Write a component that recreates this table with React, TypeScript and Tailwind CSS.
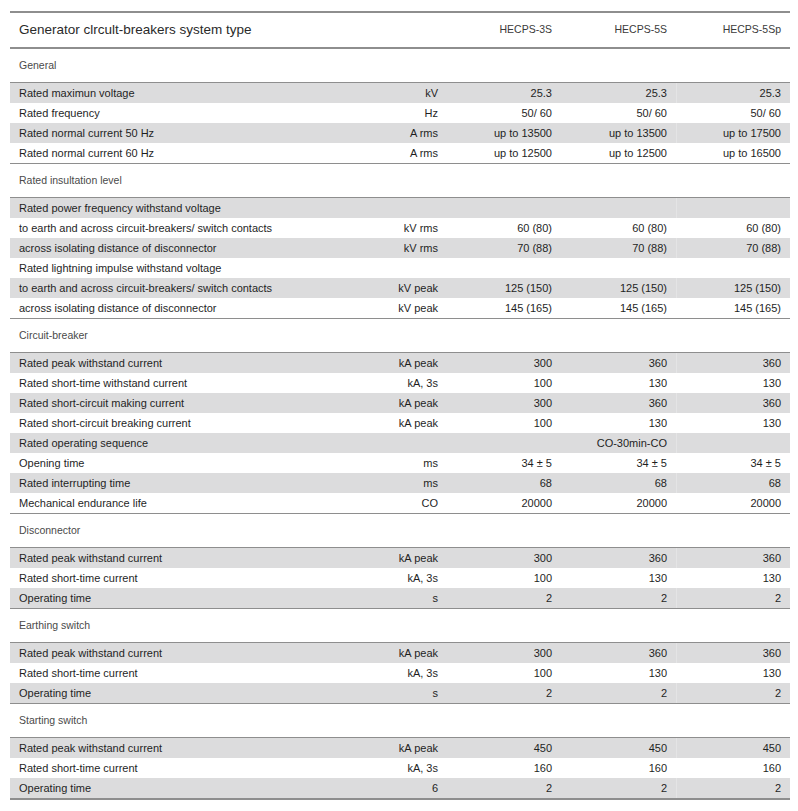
import React from "react";

type Row = { label: string; unit?: string; values?: string[] };
type Section = { title: string; rows: Row[] };

const sections: Section[] = [
  {
    title: "General",
    rows: [
      { label: "Rated maximun voltage", unit: "kV", values: ["25.3", "25.3", "25.3"] },
      { label: "Rated frequency", unit: "Hz", values: ["50/ 60", "50/ 60", "50/ 60"] },
      { label: "Rated normal current 50 Hz", unit: "A rms", values: ["up to 13500", "up to 13500", "up to 17500"] },
      { label: "Rated normal current 60 Hz", unit: "A rms", values: ["up to 12500", "up to 12500", "up to 16500"] },
    ],
  },
  {
    title: "Rated insultation level",
    rows: [
      { label: "Rated power frequency withstand voltage" },
      { label: "to earth and across circuit-breakers/ switch contacts", unit: "kV rms", values: ["60 (80)", "60 (80)", "60 (80)"] },
      { label: "across isolating distance of disconnector", unit: "kV rms", values: ["70 (88)", "70 (88)", "70 (88)"] },
      { label: "Rated lightning impulse withstand voltage" },
      { label: "to earth and across circuit-breakers/ switch contacts", unit: "kV peak", values: ["125 (150)", "125 (150)", "125 (150)"] },
      { label: "across isolating distance of disconnector", unit: "kV peak", values: ["145 (165)", "145 (165)", "145 (165)"] },
    ],
  },
  {
    title: "Circuit-breaker",
    rows: [
      { label: "Rated peak withstand current", unit: "kA peak", values: ["300", "360", "360"] },
      { label: "Rated short-time withstand current", unit: "kA, 3s", values: ["100", "130", "130"] },
      { label: "Rated short-circuit making current", unit: "kA peak", values: ["300", "360", "360"] },
      { label: "Rated short-circuit breaking current", unit: "kA peak", values: ["100", "130", "130"] },
      { label: "Rated operating sequence", values: ["", "CO-30min-CO", ""] },
      { label: "Opening time", unit: "ms", values: ["34 ± 5", "34 ± 5", "34 ± 5"] },
      { label: "Rated interrupting time", unit: "ms", values: ["68", "68", "68"] },
      { label: "Mechanical endurance life", unit: "CO", values: ["20000", "20000", "20000"] },
    ],
  },
  {
    title: "Disconnector",
    rows: [
      { label: "Rated peak withstand current", unit: "kA peak", values: ["300", "360", "360"] },
      { label: "Rated short-time current", unit: "kA, 3s", values: ["100", "130", "130"] },
      { label: "Operating time", unit: "s", values: ["2", "2", "2"] },
    ],
  },
  {
    title: "Earthing switch",
    rows: [
      { label: "Rated peak withstand current", unit: "kA peak", values: ["300", "360", "360"] },
      { label: "Rated short-time current", unit: "kA, 3s", values: ["100", "130", "130"] },
      { label: "Operating time", unit: "s", values: ["2", "2", "2"] },
    ],
  },
  {
    title: "Starting switch",
    rows: [
      { label: "Rated peak withstand current", unit: "kA peak", values: ["450", "450", "450"] },
      { label: "Rated short-time current", unit: "kA, 3s", values: ["160", "160", "160"] },
      { label: "Operating time", unit: "6", values: ["2", "2", "2"] },
    ],
  },
];

const colW = ["w-[114px]", "w-[115px]", "w-[114px]"];

function DataRow({ row, shaded }: { row: Row; shaded: boolean }) {
  const vals = row.values ?? ["", "", ""];
  return (
    <div className={`flex h-[20px] items-center text-[11px] text-[#1f1f1f] ${shaded ? "bg-[#dcdcdd]" : "bg-white"}`}>
      <div className="flex-1 pl-[9px] whitespace-nowrap">{row.label}</div>
      <div className="w-[100px] pr-[9px] text-right whitespace-nowrap">{row.unit ?? ""}</div>
      {vals.map((v, i) => (
        <div
          key={i}
          className={`${colW[i]} h-full flex items-center justify-end pr-[9px] whitespace-nowrap ${
            i === 2 && shaded ? "border-l border-[#e4e4e5]" : ""
          }`}
        >
          {v}
        </div>
      ))}
    </div>
  );
}

export default function App() {
  return (
    <div className="min-h-screen bg-white px-[10px] pt-[11px]" style={{ fontFamily: '"Liberation Sans", Arial, sans-serif' }}>
      <div className="w-[780px]">
        <div className="flex h-[38px] items-center border-y-2 border-[#8e8e8e]">
          <div className="flex-1 pl-[9px] text-[13.5px] text-[#2a2a2a]">Generator clrcult-breakers system type</div>
          <div className="w-[100px]" />
          {["HECPS-3S", "HECPS-5S", "HECPS-5Sp"].map((h, i) => (
            <div key={h} className={`${colW[i]} pr-[9px] text-right text-[10.5px] text-[#3a3a3a]`}>
              {h}
            </div>
          ))}
        </div>

        {sections.map((s, si) => (
          <div
            key={s.title}
            className={si === sections.length - 1 ? "border-b-2 border-[#8e8e8e]" : "border-b border-[#8e8e8e]"}
          >
            <div className="flex h-[34px] items-center border-b border-[#8e8e8e] pl-[9px] text-[10.5px] text-[#4a4a4a]">
              {s.title}
            </div>
            {s.rows.map((r, ri) => (
              <DataRow key={ri} row={r} shaded={ri % 2 === 0} />
            ))}
          </div>
        ))}
      </div>
    </div>
  );
}
